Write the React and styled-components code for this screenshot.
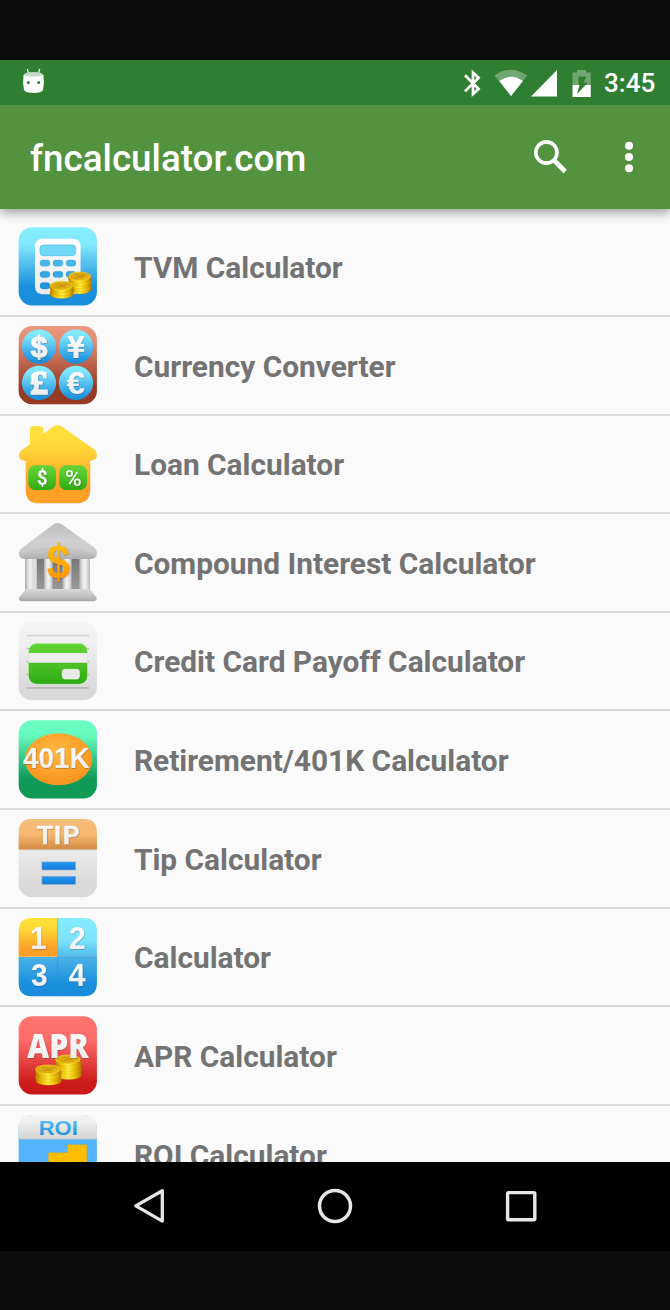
import React from 'react';
import styled, { createGlobalStyle } from 'styled-components';

const GlobalStyle = createGlobalStyle`
  * { box-sizing: border-box; }
  body { margin: 0; background: #0d0d0d; font-family: Roboto, 'Liberation Sans', sans-serif; }
`;

const Screen = styled.div`
  display: flex;
  flex-direction: column;
  width: 670px;
  height: 1310px;
  padding: 60px 0 59px;
  background: #0d0d0d;
  overflow: hidden;
`;

const StatusBar = styled.header`
  display: flex;
  align-items: center;
  flex: none;
  height: 45px;
  padding: 0 15px 0 22px;
  background: #2f7e32;
  z-index: 2;
`;

const StatusIcons = styled.div`
  display: flex;
  align-items: center;
  margin-left: auto;
  svg { display: block; }
`;

const Clock = styled.span`
  width: 51px;
  margin: 2px 0 0 13px;
  font-size: 26px;
  font-weight: 500;
  line-height: 45px;
  color: #fff;
  white-space: nowrap;
`;

const AppBar = styled.div`
  display: flex;
  align-items: center;
  flex: none;
  height: 104px;
  padding: 0 35px 0 30px;
  background: #53933f;
  box-shadow: 0 3px 11px rgba(0, 0, 0, 0.42);
  z-index: 1;
`;

const Title = styled.h1`
  flex: 1;
  margin: 3px 0 0;
  font-size: 36.8px;
  font-weight: 500;
  color: #fff;
`;

const IconButton = styled.button`
  display: flex;
  padding: 0;
  border: 0;
  background: none;
  margin-left: ${(p) => p.$gap || 0}px;
`;

const List = styled.ul`
  flex: none;
  height: 953px;
  margin: 0;
  padding: 9.25px 0 0;
  list-style: none;
  background: #fafafa;
  overflow: hidden;
`;

const Row = styled.li`
  display: flex;
  align-items: center;
  height: 98.65px;
  padding-left: 18.4px;
  border-bottom: 2px solid #dadada;
`;

const Label = styled.span`
  margin: 1.6px 0 0 37px;
  font-size: 29.85px;
  font-weight: 700;
  color: #737373;
  white-space: nowrap;
`;

const Art = styled.svg`
  display: block;
  flex: none;
  width: 78.6px;
  height: 78.6px;
  overflow: visible;
`;

const NavBar = styled.nav`
  display: flex;
  flex: none;
  align-items: center;
  justify-content: space-between;
  height: 89px;
  padding: 0 131px 1px;
  background: #000;
`;

const Stops = ({ id, colors }) => (
  <linearGradient id={id} x1="0" y1="0" x2="0" y2="1">
    {colors.map(([o, c]) => <stop key={o} offset={o} stopColor={c} />)}
  </linearGradient>
);

const Defs = () => (
  <svg width="0" height="0" style={{ position: 'absolute' }} aria-hidden="true">
    <defs>
      <Stops id="blue" colors={[[0, '#86eeff'], [0.22, '#82e9fd'], [0.75, '#1c90dd'], [1, '#188ddb']]} />
      <Stops id="disc" colors={[[0, '#83edff'], [0.2, '#7ee4fb'], [0.9, '#2093df'], [1, '#198edc']]} />
      <Stops id="rust" colors={[[0, '#ec9980'], [0.2, '#e08b70'], [0.78, '#973a24'], [1, '#963923']]} />
      <Stops id="gold" colors={[[0, '#ffe23c'], [0.25, '#ffda38'], [0.78, '#fba128'], [1, '#faa027']]} />
      <Stops id="green" colors={[[0, '#63d336'], [0.3, '#58cb2e'], [1, '#2eaa12']]} />
      <Stops id="silver" colors={[[0, '#f4f4f4'], [0.3, '#efefef'], [0.8, '#dadada'], [1, '#d9d9d9']]} />
      <Stops id="white" colors={[[0, '#fff'], [1, '#e9e9e9']]} />
      <Stops id="mint" colors={[[0, '#6bffc4'], [0.2, '#65f9bd'], [0.75, '#119a57'], [1, '#109955']]} />
      <Stops id="tan" colors={[[0, '#f6bd79'], [0.5, '#f4b871'], [1, '#d58a42']]} />
      <Stops id="red" colors={[[0, '#ff7470'], [0.3, '#ff6c69'], [0.85, '#cb1b1a'], [1, '#c91818']]} />
      <Stops id="sky" colors={[[0, '#85edff'], [0.6, '#7ce2fa'], [1, '#4fb9eb']]} />
      <Stops id="deep" colors={[[0, '#4bb2e8'], [0.7, '#198edd'], [1, '#188ddb']]} />
      <Stops id="roof" colors={[[0, '#bdbdbd'], [0.5, '#d0d0d0'], [0.8, '#c9c9c9'], [1, '#b0b0b0']]} />
      <Stops id="base" colors={[[0, '#d9d9d9'], [0.5, '#c6c6c6'], [1, '#a6a6a6']]} />
      <Stops id="dollar" colors={[[0, '#ffcb08'], [1, '#ff8d00']]} />
      <Stops id="gap" colors={[[0, '#777'], [1, '#999']]} />
      <Stops id="equals" colors={[[0, '#2196f3'], [1, '#127bd6']]} />
      <Stops id="roi" colors={[[0, '#6cc8f4'], [0.3, '#4fb3ec'], [0.85, '#1d8fdf'], [1, '#1a8ddc']]} />
      <linearGradient id="column">
        <stop offset="0" stopColor="#aaa" /><stop offset=".25" stopColor="#dedede" />
        <stop offset=".5" stopColor="#f4f4f4" /><stop offset=".8" stopColor="#d7d7d7" />
        <stop offset="1" stopColor="#b7b7b7" />
      </linearGradient>
      <linearGradient id="coinSide">
        <stop offset="0" stopColor="#b98500" /><stop offset=".2" stopColor="#e9b900" />
        <stop offset=".5" stopColor="#ffee3b" /><stop offset=".8" stopColor="#e8b400" />
        <stop offset="1" stopColor="#b27c00" />
      </linearGradient>
      <linearGradient id="coinTop" x1="0" y1="0" x2="1" y2="1">
        <stop offset="0" stopColor="#edbd11" /><stop offset=".5" stopColor="#d8a50a" />
        <stop offset="1" stopColor="#f1c61c" />
      </linearGradient>
      <radialGradient id="orange" cx=".45" cy=".35" r=".6">
        <stop offset="0" stopColor="#ffb940" /><stop offset="1" stopColor="#fa9622" />
      </radialGradient>
      <filter id="lift" x="-20%" y="-20%" width="150%" height="150%">
        <feDropShadow dx="1.5" dy="2" stdDeviation="1.5" floodColor="#333" floodOpacity=".4" />
      </filter>
    </defs>
  </svg>
);

const Coins = ({ x, y, r, count, step = 9 }) => (
  <g>
    {Array.from({ length: count }, (_, i) => count - i).map((n) => {
      const top = y + (n - 1) * step;
      const cx = x + (n % 2 ? 0 : 2);
      return (
        <path key={n} d={`M${cx - r} ${top} v8 a${r} 13 0 0 0 ${2 * r} 0 v-8z`} fill="url(#coinSide)" stroke="#ae7a00" strokeOpacity=".35" strokeWidth="1.5" />
      );
    })}
    <ellipse cx={x} cy={y} rx={r - 1} ry="13" fill="url(#coinTop)" stroke="#f5d12b" strokeWidth="2" />
    <path d={`M${x - 18} ${y - 3}q10 -7 17 0t17 -2M${x - 12} ${y + 5}q10 -7 24 -1`} fill="none" stroke="#a97600" strokeOpacity=".5" strokeWidth="3" />
  </g>
);

const Glyph = ({ x, y, size, fill = 'url(#white)', family = 'Liberation Sans', weight = 700, width, outline = 0, children }) => (
  <text x={x} y={y} fontSize={size} fill={fill} stroke={fill} strokeWidth={outline} fontFamily={`'${family}', sans-serif`} fontWeight={weight} textAnchor="middle" textLength={width} lengthAdjust="spacingAndGlyphs" filter="url(#lift)">
    {children}
  </text>
);

const Tile = ({ top = 33, fill }) => <rect x="56" y={top} width="235" height="235" rx="40" fill={fill} />;

const TvmIcon = () => (
  <Art viewBox="54 37 236 236">
    <Tile top={37.5} fill="url(#blue)" />
    <rect x="105" y="72" width="137" height="167" rx="22" fill="url(#white)" />
    <rect x="120" y="91" width="107" height="32" rx="10" fill="#70d9f7" stroke="#4dbce3" strokeWidth="2" />
    {[[136, '#48b7e9'], [170, '#35a6e4'], [204, '#1f93dd']].map(([y, c]) =>
      [120, 159, 198].map((x) => <rect key={`${x}-${y}`} x={x} y={y} width="30" height="19" rx="9" fill={c} stroke="#2188be" strokeOpacity=".4" strokeWidth="2" />)
    )}
    <Coins x={239} y={185} r={34} count={5} step={8} />
    <Coins x={185} y={213} r={35} count={3} />
  </Art>
);

const currencies = [
  { x: 117, y: 95, sign: '$', base: 125, size: 89, width: 50, outline: 3 },
  { x: 228, y: 95, sign: '¥', base: 129, size: 92, width: 54, family: 'DejaVu Sans' },
  { x: 117, y: 204, sign: '£', base: 236, size: 98, width: 54, family: 'Liberation Serif', outline: 5 },
  { x: 228, y: 204, sign: '€', base: 237, size: 96, width: 56 },
];

const CurrencyIcon = () => (
  <Art viewBox="54 33 236 236">
    <Tile fill="url(#rust)" />
    {currencies.map((c) => (
      <g key={c.sign}>
        <circle cx={c.x} cy={c.y} r="51.5" fill="url(#disc)" />
        <Glyph x={c.x} y={c.base} size={c.size} family={c.family} width={c.width} outline={c.outline}>{c.sign}</Glyph>
      </g>
    ))}
  </Art>
);

const LoanIcon = () => (
  <Art viewBox="54 33 236 236">
    <path d="M90 91V48Q90 36 102 36H118Q130 36 130 48V59L159 38Q173 28 187 38L281 105Q291 112 291 124Q290 140 271 140V234Q268 264 238 268H108Q79 264 77 234V140Q58 141 56 124Q56 115 65 109Z" fill="url(#gold)" />
    <rect x="85" y="154" width="83" height="74" rx="21" fill="url(#green)" />
    <rect x="178" y="154" width="83" height="74" rx="21" fill="url(#green)" />
    <Glyph x={127} y={214} size={61} family="Roboto" width={32}>$</Glyph>
    <Glyph x={220} y={216} size={68} family="Roboto" weight={500} width={50}>%</Glyph>
  </Art>
);

const BankIcon = () => (
  <Art viewBox="54 33 236 236">
    <rect x="77" y="138" width="193" height="95" fill="url(#gap)" />
    {[[75, 36], [132, 26], [188, 27], [238, 32]].map(([x, w]) => <rect key={x} x={x} y="138" width={w} height="95" fill="url(#column)" />)}
    <rect x="95" y="138" width="14" height="95" fill="#dedede" />
    <path d="M65 109L159 38Q173 28 187 38L281 105Q291 112 291 124Q290 140 271 141H75Q58 141 56 124Q56 115 65 109Z" fill="url(#roof)" />
    <path d="M58 133Q175 77 289 133Q284 141 271 141H75Q64 141 58 133Z" fill="#aaa" fillOpacity=".2" />
    <path d="M84 231H263Q271 231 275 238L290 257Q292 268 279 268H68Q54 268 57 257L72 238Q76 231 84 231Z" fill="url(#base)" />
    <Glyph x={175} y={197} size={146} fill="url(#dollar)" width={70}>$</Glyph>
  </Art>
);

const CardIcon = () => (
  <Art viewBox="54 33 236 236">
    <Tile fill="url(#silver)" />
    {[74, 113, 152, 191, 231].map((y) => <path key={y} d={`M80 ${y}H267`} stroke={y < 100 ? '#d3d3d3' : '#b8b8b8'} strokeWidth="5" />)}
    <rect x="85" y="97" width="178" height="123" rx="25" fill="url(#green)" stroke="#fff" strokeOpacity=".65" strokeWidth="2" />
    <path d="M85 126H263V156H85Z" fill="#ededed" />
    <path d="M85 156H263" stroke="#329319" strokeOpacity=".5" strokeWidth="2" />
    <rect x="187" y="175" width="51" height="29" rx="8" fill="#e9e9e9" stroke="#fff" strokeWidth="2" />
  </Art>
);

const RetirementIcon = () => (
  <Art viewBox="54 35 236 236">
    <Tile top={35.5} fill="url(#mint)" />
    <ellipse cx="176" cy="153" rx="101" ry="78" fill="url(#orange)" />
    <Glyph x={169} y={180} size={86} width={200}>401K</Glyph>
  </Art>
);

const TipIcon = () => (
  <Art viewBox="54 33 236 236">
    <Tile fill="url(#silver)" />
    <path d="M56 125V73Q56 33 96 33H251Q291 33 291 73V125Z" fill="url(#tan)" />
    <path d="M56 126H291" stroke="#cfcfcf" strokeWidth="2" />
    <Glyph x={175} y={109} size={77} family="Open Sans" weight={600} width={130} outline={1.5}>TIP</Glyph>
    {[162, 205].map((y) => <rect key={y} x="126" y={y} width="101" height="24" fill="url(#equals)" stroke="#81a6c7" strokeWidth="2" />)}
  </Art>
);

const CalculatorIcon = () => (
  <Art viewBox="54 33 236 236">
    <path d="M56 149V73Q56 33 96 33H172V149Z" fill="url(#gold)" />
    <path d="M173 149V33H251Q291 33 291 73V149Z" fill="url(#sky)" />
    <path d="M56 150H291V228Q291 268 251 268H96Q56 268 56 228Z" fill="url(#deep)" />
    <path d="M173 33V268M173 150H291" stroke="#268fca" strokeOpacity=".55" strokeWidth="3" />
    <Glyph x={115} y={126} size={94} width={49}>1</Glyph>
    <Glyph x={232} y={126} size={94} width={50}>2</Glyph>
    <Glyph x={118} y={236} size={94} width={50}>3</Glyph>
    <Glyph x={231} y={236} size={94} width={51}>4</Glyph>
  </Art>
);

const AprIcon = () => (
  <Art viewBox="54 327 236 236">
    <Tile top={327.5} fill="url(#red)" />
    <Coins x={204} y={457} r={38} count={6} step={8} />
    <Coins x={144} y={487} r={38} count={4} />
    <Glyph x={174} y={453} size={101} family="Open Sans" weight={800} width={184}>APR</Glyph>
  </Art>
);

const RoiIcon = () => (
  <Art viewBox="54 45 236 236">
    <Tile top={45} fill="#55b4ff" />
    <path d="M56 117V85Q56 45 96 45H251Q291 45 291 85V117Z" fill="url(#silver)" />
    <path d="M56 117H291" stroke="#c0c9d0" strokeWidth="3" />
    <path d="M145 281V158H202V134H261V281Z" fill="#ffbd00" stroke="#9caf63" strokeWidth="2" />
    <text x="175" y="106" fontSize="62" fontFamily="'Liberation Sans', sans-serif" fontWeight="700" textAnchor="middle" textLength="118" lengthAdjust="spacingAndGlyphs" fill="url(#roi)">ROI</text>
  </Art>
);

const AndroidIcon = () => (
  <svg width="23" height="28" viewBox="0 0 23 28" style={{ marginTop: -4 }}>
    <path d="M5.3 2L6.8 7M17.8 2L16.3 7" stroke="#fff" strokeWidth="1.2" />
    <path d="M1.5 8Q11.5 3.5 21.5 8Q22.5 16 21 23Q19.5 26 11.5 26Q3.5 26 2 23Q.5 16 1.5 8Z" fill="#fff" />
    <ellipse cx="11.5" cy="7.4" rx="9.3" ry="2.3" fill="#c4dcc5" />
    <circle cx="6.3" cy="15.4" r="1.5" fill="#2f7e32" />
    <circle cx="16.7" cy="15.4" r="1.5" fill="#2f7e32" />
  </svg>
);

const SystemIcons = () => (
  <svg width="129" height="30" viewBox="462 67 129 30">
    <path d="M465 74.2L478.6 88L473 93V71.6L478.6 76.8L465 90.4" fill="none" stroke="#fff" strokeWidth="2.7" />
    <path d="M494.5 74.5Q510.8 63 527 74.5L511 95Z" fill="#70a672" />
    <path d="M499.3 80Q511 71.5 523 80L511 95Z" fill="#fff" />
    <path d="M531 95.5L557 69V95.5Z" fill="#fff" />
    <path d="M572.5 71.5H577V69H586V71.5H590.7V84H572.5Z" fill="#70a672" />
    <path d="M572.5 84H590.7V96H572.5Z" fill="#fff" />
    <path d="M578.5 75.5H586.5L583.7 81.5H588L577 93L579.5 84H578.5Z" fill="#2f7e32" />
  </svg>
);

const rows = [
  ['TVM Calculator', TvmIcon],
  ['Currency Converter', CurrencyIcon],
  ['Loan Calculator', LoanIcon],
  ['Compound Interest Calculator', BankIcon],
  ['Credit Card Payoff Calculator', CardIcon],
  ['Retirement/401K Calculator', RetirementIcon],
  ['Tip Calculator', TipIcon],
  ['Calculator', CalculatorIcon],
  ['APR Calculator', AprIcon],
  ['ROI Calculator', RoiIcon],
];

export default function App() {
  return (
    <Screen>
      <GlobalStyle />
      <Defs />
      <StatusBar>
        <AndroidIcon />
        <StatusIcons>
          <SystemIcons />
          <Clock>3:45</Clock>
        </StatusIcons>
      </StatusBar>
      <AppBar>
        <Title>fncalculator.com</Title>
        <IconButton aria-label="Search">
          <svg width="36" height="36" viewBox="532 138.5 36 36">
            <circle cx="546.4" cy="152" r="10.6" fill="none" stroke="#fff" strokeWidth="3.6" />
            <path d="M554.2 160L565.2 171" stroke="#fff" strokeWidth="4.6" />
          </svg>
        </IconButton>
        <IconButton aria-label="More options" $gap={55}>
          <svg width="12" height="32" viewBox="0 0 12 32">
            {[4.8, 16, 27.2].map((y) => <circle key={y} cx="6" cy={y} r="4" fill="#fff" />)}
          </svg>
        </IconButton>
      </AppBar>
      <List>
        {rows.map(([label, Icon]) => (
          <Row key={label}>
            <Icon />
            <Label>{label}</Label>
          </Row>
        ))}
      </List>
      <NavBar>
        <IconButton aria-label="Back">
          <svg width="36" height="38" viewBox="0 0 36 38">
            <path d="M31.3 3.7V34.1L4.8 18.9Z" fill="none" stroke="#e6e6e6" strokeWidth="3.3" strokeLinejoin="round" />
          </svg>
        </IconButton>
        <IconButton aria-label="Home">
          <svg width="36" height="36" viewBox="0 0 36 36">
            <circle cx="18" cy="18" r="15.5" fill="none" stroke="#e6e6e6" strokeWidth="3.5" />
          </svg>
        </IconButton>
        <IconButton aria-label="Overview">
          <svg width="36" height="36" viewBox="0 0 36 36">
            <rect x="4.6" y="4.6" width="27.2" height="27.2" rx="1" fill="none" stroke="#e6e6e6" strokeWidth="3.4" />
          </svg>
        </IconButton>
      </NavBar>
    </Screen>
  );
}
